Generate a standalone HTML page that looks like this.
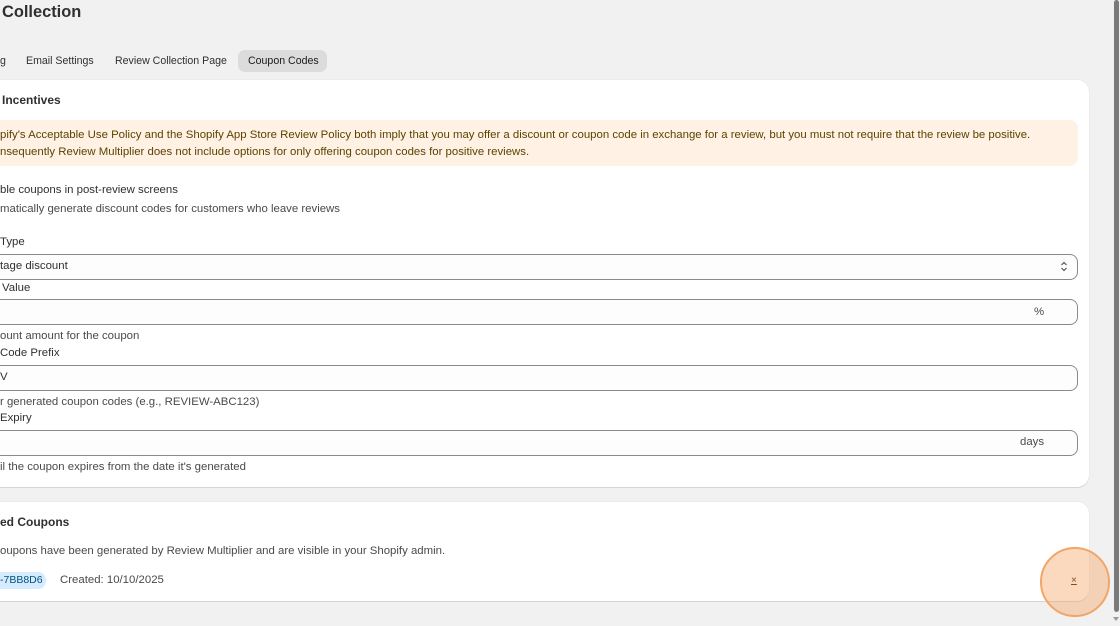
<!DOCTYPE html>
<html><head><meta charset="utf-8"><style>
*{margin:0;padding:0;box-sizing:border-box}
body{width:1120px;height:626px;background:#f1f1f1;font-family:"Liberation Sans",sans-serif;color:#303030;position:relative;overflow:hidden;font-size:11.4px}
.a{position:absolute;white-space:nowrap}
.card{position:absolute;left:-20px;width:1109px;background:#fff;border-radius:12px;box-shadow:0 1px 0 #d4d4d4,0 0 0 1px #ececec}
.inp{position:absolute;left:-20px;width:1098px;height:26px;border:1px solid #8a8a8a;border-radius:8px;background:#fdfdfd}
.b{font-weight:bold}
.g{color:#4a4a4a}
.t{font-size:10.6px}
</style></head><body>
<div class="a b" style="left:2px;top:3px;font-size:16.4px;color:#303030">Collection</div>
<div class="a t" style="left:0;top:55px">g</div>
<div class="a t" style="left:26px;top:55px">Email Settings</div>
<div class="a t" style="left:115px;top:55px">Review Collection Page</div>
<div class="a" style="left:238px;top:50px;width:89px;height:22px;background:#dcdcdc;border-radius:7px"></div>
<div class="a t" style="left:248px;top:55px;color:#1a1a1a">Coupon Codes</div>

<div class="card" style="top:80px;height:407px"></div>
<div class="a b" style="left:2px;top:93px;font-size:12px">Incentives</div>
<div class="a" style="left:-10px;top:120px;width:1088px;height:46px;background:#fff1e3;border-radius:8px"></div>
<div class="a" style="left:0;top:129px;color:#5e4200">pify's Acceptable Use Policy and the Shopify App Store Review Policy both imply that you may offer a discount or coupon code in exchange for a review, but you must not require that the review be positive.</div>
<div class="a" style="left:0;top:146px;color:#5e4200">nsequently Review Multiplier does not include options for only offering coupon codes for positive reviews.</div>
<div class="a" style="left:0;top:184px">ble coupons in post-review screens</div>
<div class="a g" style="left:0;top:203px">matically generate discount codes for customers who leave reviews</div>
<div class="a" style="left:0;top:236px">Type</div>
<div class="inp" style="top:254px"></div>
<div class="a" style="left:0;top:260px">tage discount</div>
<svg class="a" style="left:1059px;top:260px" width="10" height="13" viewBox="0 0 10 13"><path d="M2.5 5 5 2.5 7.5 5M2.5 8 5 10.5 7.5 8" fill="none" stroke="#555" stroke-width="1.2"/></svg>
<div class="a" style="left:2px;top:282px">Value</div>
<div class="inp" style="top:299px"></div>
<div class="a g" style="left:1034px;top:306px">%</div>
<div class="a g" style="left:0;top:330px">ount amount for the coupon</div>
<div class="a" style="left:0;top:347px">Code Prefix</div>
<div class="inp" style="top:365px"></div>
<div class="a" style="left:0;top:371px">V</div>
<div class="a g" style="left:0;top:396px">r generated coupon codes (e.g., REVIEW-ABC123)</div>
<div class="a" style="left:0;top:412px">Expiry</div>
<div class="inp" style="top:430px"></div>
<div class="a g" style="left:1020px;top:436px">days</div>
<div class="a g" style="left:0;top:461px">il the coupon expires from the date it's generated</div>

<div class="card" style="top:502px;height:99px"></div>
<div class="a b" style="left:0;top:515px;font-size:12px">ed Coupons</div>
<div class="a g" style="left:0;top:545px">oupons have been generated by Review Multiplier and are visible in your Shopify admin.</div>
<div class="a" style="left:-10px;top:572px;width:56px;height:17px;background:#d5ebff;border-radius:8px"></div>
<div class="a" style="left:0;top:574px;color:#00527c;font-size:10.5px">-7BB8D6</div>
<div class="a" style="left:60px;top:574px;color:#4a4a4a">Created: 10/10/2025</div>

<div class="a" style="left:1040px;top:547px;width:70px;height:70px;border-radius:50%;background:rgba(247,170,110,.45);border:2px solid #f3a565"></div>
<div class="a" style="left:1071px;top:575px;color:#8a4a1a;font-size:10px;text-decoration:underline">×</div>

<div class="a" style="left:1113px;top:0;width:7px;height:626px;background:#f1f1f1"></div>
<div class="a" style="left:1114px;top:0;width:5px;height:612px;background:#7a7a7a;border-radius:3px"></div>
<div class="a" style="left:1113px;top:617px;width:0;height:0;border-left:3px solid transparent;border-right:3px solid transparent;border-top:4px solid #999"></div>
</body></html>
